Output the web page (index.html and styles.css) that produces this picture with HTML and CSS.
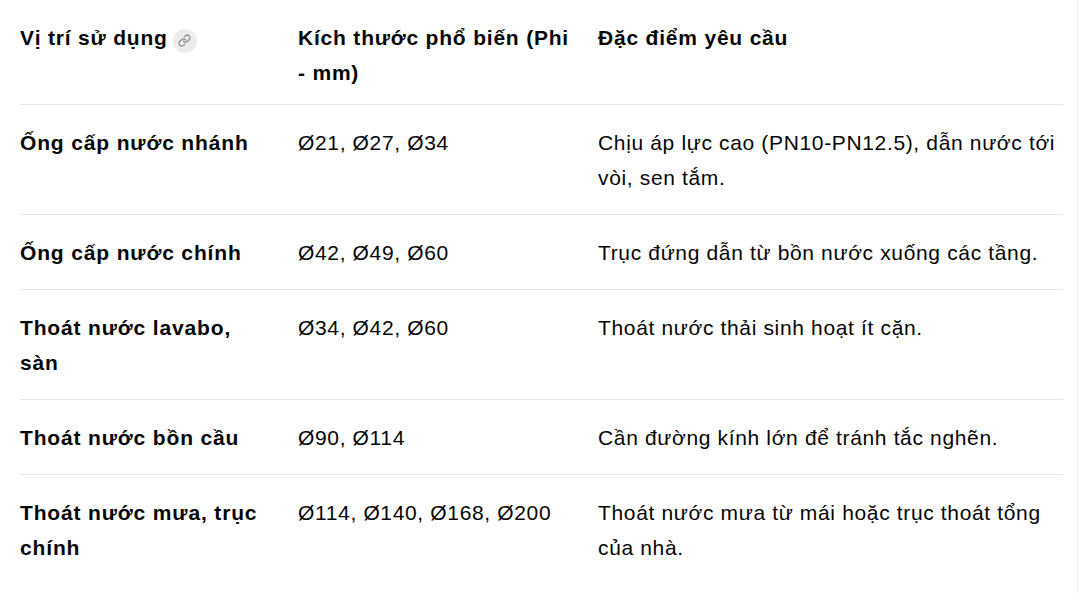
FILE: index.html
```html
<!DOCTYPE html>
<html lang="vi">
<head>
<meta charset="utf-8">
<title>Bảng kích thước ống</title>
<link rel="stylesheet" href="styles.css">
</head>
<body>
<div class="frame">
  <table class="pipes">
    <colgroup>
      <col class="c1">
      <col class="c2">
      <col class="c3">
    </colgroup>
    <thead>
      <tr>
        <th class="first">Vị trí sử dụng<span class="anchor"><svg viewBox="0 0 24 24" width="13" height="13" fill="none" stroke="currentColor" stroke-width="2.4" stroke-linecap="round" stroke-linejoin="round"><path d="M10 13a5 5 0 0 0 7.54.54l3-3a5 5 0 0 0-7.07-7.07l-1.72 1.71"/><path d="M14 11a5 5 0 0 0-7.54-.54l-3 3a5 5 0 0 0 7.07 7.07l1.71-1.71"/></svg></span></th>
        <th class="second">Kích thước phổ biến (Phi - mm)</th>
        <th class="third">Đặc điểm yêu cầu</th>
      </tr>
    </thead>
    <tbody>
      <tr>
        <td class="first name">Ống cấp nước nhánh</td>
        <td class="second">Ø21, Ø27, Ø34</td>
        <td class="third">Chịu áp lực cao (PN10-PN12.5), dẫn nước tới vòi, sen tắm.</td>
      </tr>
      <tr>
        <td class="first name">Ống cấp nước chính</td>
        <td class="second">Ø42, Ø49, Ø60</td>
        <td class="third">Trục đứng dẫn từ bồn nước xuống các tầng.</td>
      </tr>
      <tr>
        <td class="first name">Thoát nước lavabo, sàn</td>
        <td class="second">Ø34, Ø42, Ø60</td>
        <td class="third">Thoát nước thải sinh hoạt ít cặn.</td>
      </tr>
      <tr>
        <td class="first name">Thoát nước bồn cầu</td>
        <td class="second">Ø90, Ø114</td>
        <td class="third">Cần đường kính lớn để tránh tắc nghẽn.</td>
      </tr>
      <tr class="last">
        <td class="first name">Thoát nước mưa, trục chính</td>
        <td class="second">Ø114, Ø140, Ø168, Ø200</td>
        <td class="third">Thoát nước mưa từ mái hoặc trục thoát tổng của nhà.</td>
      </tr>
    </tbody>
  </table>
</div>
</body>
</html>
```

FILE: styles.css
```css
html, body {
  margin: 0;
  padding: 0;
  background: #ffffff;
}

body {
  font-family: "Liberation Sans", Arial, Helvetica, sans-serif;
  color: #050505;
}

.frame {
  width: 1078px;
  height: 593px;
  border-right: 1px solid #eeeeee;
  padding-left: 20px;
  box-sizing: border-box;
  overflow: hidden;
}

.pipes {
  width: 1043px;
  table-layout: fixed;
  border-collapse: collapse;
  font-size: 21px;
  letter-spacing: 0.65px;
  line-height: 35px;
}

.c1 { width: 278px; }
.c2 { width: 300px; }

.pipes th,
.pipes td {
  text-align: left;
  vertical-align: top;
  padding: 20px 0 19px 0;
  border-bottom: 1px solid #e6e6e6;
}

.pipes th {
  font-weight: 700;
  letter-spacing: 0.8px;
  padding-bottom: 14px;
}

.pipes .first { padding-right: 36px; }
.pipes .second { padding-right: 26px; }
.pipes .third { padding-right: 0; }

.pipes td.name {
  font-weight: 700;
  letter-spacing: 0.85px;
}

.pipes tr.last td { border-bottom: none; }

.anchor {
  display: inline-flex;
  align-items: center;
  justify-content: center;
  width: 24px;
  height: 24px;
  border-radius: 50%;
  background: #ececec;
  color: #8e8e8e;
  margin-left: 5px;
  vertical-align: -2px;
}
```
